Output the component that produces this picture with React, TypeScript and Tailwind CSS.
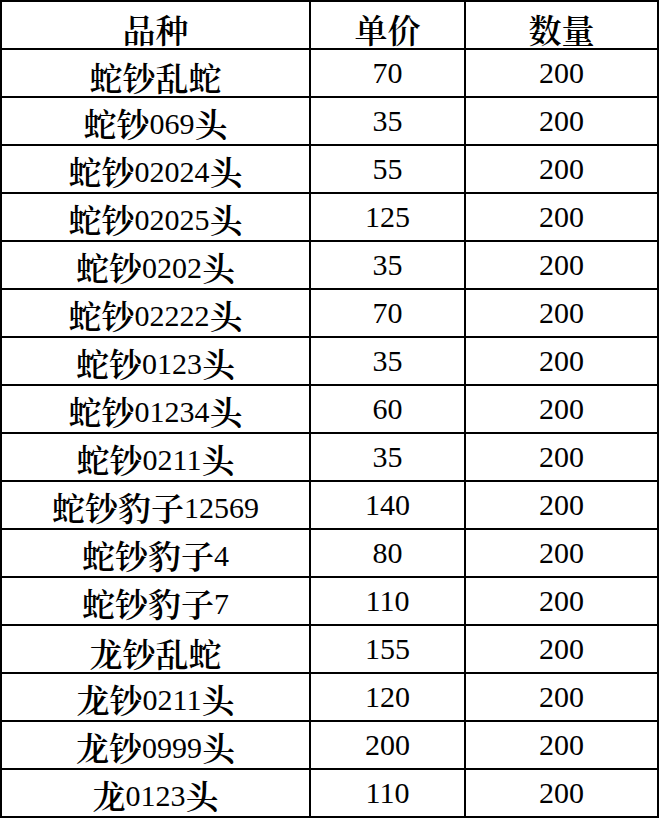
const rows: [string, string, string][] = [
  ["蛇钞乱蛇", "70", "200"],
  ["蛇钞069头", "35", "200"],
  ["蛇钞02024头", "55", "200"],
  ["蛇钞02025头", "125", "200"],
  ["蛇钞0202头", "35", "200"],
  ["蛇钞02222头", "70", "200"],
  ["蛇钞0123头", "35", "200"],
  ["蛇钞01234头", "60", "200"],
  ["蛇钞0211头", "35", "200"],
  ["蛇钞豹子12569", "140", "200"],
  ["蛇钞豹子4", "80", "200"],
  ["蛇钞豹子7", "110", "200"],
  ["龙钞乱蛇", "155", "200"],
  ["龙钞0211头", "120", "200"],
  ["龙钞0999头", "200", "200"],
  ["龙0123头", "110", "200"],
];

const cell =
  "h-[48px] border-r-2 border-b-2 border-black flex items-center justify-center leading-none whitespace-pre";

// digits in Times-like serif, hanzi in a Song-style serif a bit larger and lower
const Mixed = ({ text }: { text: string }) => {
  const parts = text.match(/[0-9]+|[^0-9]+/g) ?? [];
  return (
    <span>
      {parts.map((p, i) =>
        /[0-9]/.test(p) ? (
          <span key={i} className="font-['Liberation_Serif',serif] text-[30px]">
            {p}
          </span>
        ) : (
          <span
            key={i}
            className="font-['Noto_Serif_CJK_SC',serif] font-semibold text-[33px] relative top-[3px]"
          >
            {p}
          </span>
        )
      )}
    </span>
  );
};

const App = () => {
  return (
    <div className="w-[659px] bg-white text-black">
      <div className="grid grid-cols-[309px_155px_193px] border-t-2 border-l-2 border-black">
        <div className={cell}>
          <Mixed text="品种" />
        </div>
        <div className={cell}>
          <Mixed text="单价" />
        </div>
        <div className={cell}>
          <Mixed text="数量" />
        </div>
        {rows.map(([name, price, qty]) => (
          <div key={name} className="contents">
            <div className={cell}>
              <Mixed text={name} />
            </div>
            <div className={cell}>
              <Mixed text={price} />
            </div>
            <div className={cell}>
              <Mixed text={qty} />
            </div>
          </div>
        ))}
      </div>
    </div>
  );
};

export default App;
